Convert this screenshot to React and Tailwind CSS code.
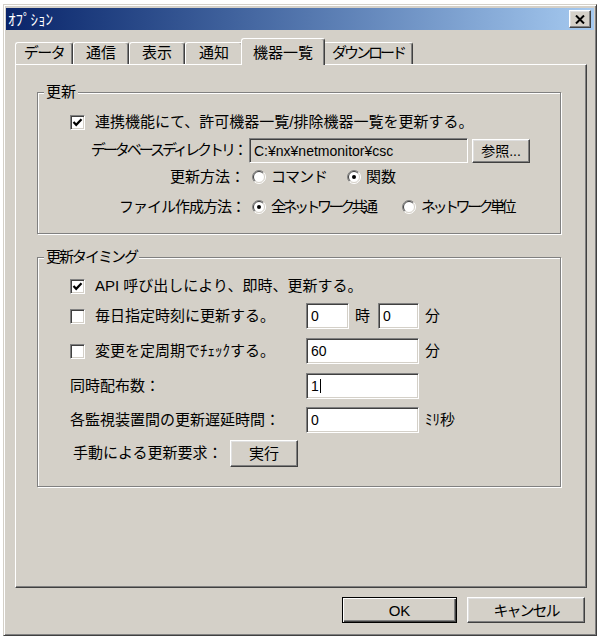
import React from 'react'

const raised =
  'border border-t-white border-l-white border-r-[#404040] border-b-[#404040] shadow-[inset_-1px_-1px_0_#808080,inset_1px_1px_0_#dfdfdf]'
const sunken =
  'border border-t-[#808080] border-l-[#808080] border-r-white border-b-white shadow-[inset_1px_1px_0_#404040,inset_-1px_-1px_0_#d4d0c8]'

const CheckBox = ({ checked }) => (
  <span className={`flex w-[15px] h-[15px] shrink-0 items-center justify-center bg-white ${sunken}`}>
    {checked && (
      <svg width='11' height='11' viewBox='0 0 11 11'>
        <path d='M1.5 5 L4.2 7.8 L9.5 2.3' fill='none' stroke='black' strokeWidth='2.2' />
      </svg>
    )}
  </span>
)

const Radio = ({ checked }) => (
  <svg width='14' height='14' viewBox='0 0 14 14' className='shrink-0'>
    <circle cx='7' cy='7' r='6' fill='white' />
    <path d='M2.4 11.6 A6.5 6.5 0 0 1 11.6 2.4' fill='none' stroke='#808080' />
    <path d='M11.6 2.4 A6.5 6.5 0 0 1 2.4 11.6' fill='none' stroke='#ffffff' />
    <path d='M3.1 10.9 A5.5 5.5 0 0 1 10.9 3.1' fill='none' stroke='#404040' />
    <path d='M10.9 3.1 A5.5 5.5 0 0 1 3.1 10.9' fill='none' stroke='#d4d0c8' />
    {checked && <circle cx='7' cy='7' r='2' fill='black' />}
  </svg>
)

const TextBox = ({ className, children }) => (
  <div className={`flex items-center bg-white pl-[4px] text-[14px] leading-none ${sunken} ${className}`}>
    {children}
  </div>
)

const Group = ({ title, className, children }) => (
  <div className={`relative border border-[#808080] shadow-[1px_1px_0_white,inset_1px_1px_0_white] ${className}`}>
    {title}
    {children}
  </div>
)

const tabBase =
  'flex items-center justify-center rounded-t-[3px] border-t border-l border-r border-t-white border-l-white border-r-[#404040] shadow-[inset_-1px_0_0_#808080]'

export default function App () {
  return (
    <div className="w-[600px] h-[639px] bg-white pt-[4px] pl-[3px] text-[15px] text-black font-['Liberation_Sans','Noto_Sans_CJK_JP',sans-serif]">
      <div className='flex h-[632px] w-[594px] flex-col border border-t-[#d4d0c8] border-l-[#d4d0c8] border-r-[#404040] border-b-[#404040] bg-[#d4d0c8] px-[2px] pt-[3px] shadow-[inset_1px_1px_0_white,inset_-1px_-1px_0_#808080]'>
        {/* title bar */}
        <div className='flex h-[22px] items-center justify-between bg-linear-to-r from-[#0a246a] to-[#a6caf0] pl-[2px] pr-[3px]'>
          <span className='leading-none text-white'>ｵﾌﾟｼｮﾝ</span>
          <button className={`flex h-[18px] w-[22px] items-center justify-center bg-[#d4d0c8] ${raised}`}>
            <svg width='10' height='9' viewBox='0 0 10 9'>
              <path d='M1 0.5 L9 8.5 M9 0.5 L1 8.5' stroke='black' strokeWidth='2' />
            </svg>
          </button>
        </div>

        {/* tabs */}
        <div className='ml-[9px] mt-[9px] flex h-[25px] items-end'>
          <div className={`${tabBase} h-[22px] w-[58px] tracking-[-1.5px]`}>データ</div>
          <div className={`${tabBase} h-[22px] w-[56px]`}>通信</div>
          <div className={`${tabBase} h-[22px] w-[56px]`}>表示</div>
          <div className={`${tabBase} h-[22px] w-[58px]`}>通知</div>
          <div className={`${tabBase} relative z-10 -mx-[2px] -mb-[1px] h-[27px] w-[84px] items-start bg-[#d4d0c8] pt-[3px]`}>機器一覧</div>
          <div className={`${tabBase} h-[22px] w-[90px] tracking-[-3px]`}>ダウンロード</div>
        </div>

        {/* tab panel */}
        <div className='ml-[9px] h-[524px] w-[572px] border border-t-white border-l-white border-r-[#404040] border-b-[#404040] shadow-[inset_-1px_-1px_0_#808080]'>
          <Group
            title={<span className='absolute left-[6px] -top-[11px] bg-[#d4d0c8] px-[2px] leading-[20px]'>更新</span>}
            className='ml-[21px] mt-[27px] h-[142px] w-[524px]'
          >
            <div className='mt-[19px] flex h-[20px] items-center pl-[32px]'>
              <CheckBox checked />
              <span className='ml-[10px]'>連携機能にて、許可機器一覧/排除機器一覧を更新する。</span>
            </div>
            <div className='mt-[6px] flex h-[25px] items-center'>
              <span className='w-[207px] text-right tracking-[-3px]'>データベースディレクトリ：</span>
              <TextBox className='ml-[4px] h-[25px] w-[219px] !bg-[#d4d0c8]'>C:¥nx¥netmonitor¥csc</TextBox>
              <button className={`ml-[4px] h-[24px] w-[58px] bg-[#d4d0c8] text-[14px] leading-none ${raised}`}>参照...</button>
            </div>
            <div className='mt-[4px] flex h-[20px] items-center'>
              <span className='w-[207px] text-right'>更新方法：</span>
              <div className='ml-[7px] flex w-[95px] items-center'>
                <Radio />
                <span className='ml-[5px] tracking-[-1px]'>コマンド</span>
              </div>
              <div className='flex items-center'>
                <Radio checked />
                <span className='ml-[5px]'>関数</span>
              </div>
            </div>
            <div className='mt-[10px] flex h-[20px] items-center'>
              <span className='w-[207px] text-right tracking-[-1px]'>ファイル作成方法：</span>
              <div className='ml-[7px] flex w-[150px] items-center'>
                <Radio checked />
                <span className='ml-[5px] tracking-[-3.5px]'>全ネットワーク共通</span>
              </div>
              <div className='flex items-center'>
                <Radio />
                <span className='ml-[5px] tracking-[-3.5px]'>ネットワーク単位</span>
              </div>
            </div>
          </Group>

          <Group
            title={<span className='absolute left-[6px] -top-[11px] bg-[#d4d0c8] px-[2px] leading-[20px] tracking-[-2px]'>更新タイミング</span>}
            className='ml-[21px] mt-[23px] h-[230px] w-[524px]'
          >
            <div className='mt-[18px] flex h-[20px] items-center pl-[32px]'>
              <CheckBox checked />
              <span className='ml-[10px]'>API 呼び出しにより、即時、更新する。</span>
            </div>
            <div className='mt-[7px] flex h-[26px] items-center'>
              <div className='flex w-[268px] items-center pl-[32px]'>
                <CheckBox />
                <span className='ml-[10px]'>毎日指定時刻に更新する。</span>
              </div>
              <TextBox className='h-[26px] w-[43px]'>0</TextBox>
              <span className='ml-[6px] w-[17px]'>時</span>
              <TextBox className='ml-[6px] h-[26px] w-[41px]'>0</TextBox>
              <span className='ml-[6px]'>分</span>
            </div>
            <div className='mt-[9px] flex h-[26px] items-center'>
              <div className='flex w-[268px] items-center pl-[32px]'>
                <CheckBox />
                <span className='ml-[10px]'>変更を定周期でﾁｪｯｸする。</span>
              </div>
              <TextBox className='h-[26px] w-[113px]'>60</TextBox>
              <span className='ml-[6px]'>分</span>
            </div>
            <div className='mt-[9px] flex h-[26px] items-center'>
              <span className='w-[268px] pl-[32px]'>同時配布数：</span>
              <TextBox className='h-[26px] w-[113px]'>
                1<span className='ml-[1px] h-[14px] w-[1px] bg-black' />
              </TextBox>
            </div>
            <div className='mt-[8px] flex h-[26px] items-center'>
              <span className='w-[268px] pl-[32px]'>各監視装置間の更新遅延時間：</span>
              <TextBox className='h-[26px] w-[113px]'>0</TextBox>
              <span className='ml-[6px]'>ﾐﾘ秒</span>
            </div>
            <div className='mt-[7px] flex h-[27px] items-center'>
              <span className='w-[192px] pl-[35px]'>手動による更新要求：</span>
              <button className={`h-[27px] w-[68px] bg-[#d4d0c8] leading-none ${raised}`}>実行</button>
            </div>
          </Group>
        </div>

        {/* dialog buttons */}
        <div className='mt-[9px] flex justify-end gap-[10px] pr-[9px]'>
          <button className='h-[26px] w-[115px] border border-black bg-[#d4d0c8] leading-none shadow-[inset_1px_1px_0_white,inset_-1px_-1px_0_#404040,inset_-2px_-2px_0_#808080]'>
            OK
          </button>
          <button className={`h-[26px] w-[118px] bg-[#d4d0c8] leading-none tracking-[-2px] ${raised}`}>キャンセル</button>
        </div>
      </div>
    </div>
  )
}
